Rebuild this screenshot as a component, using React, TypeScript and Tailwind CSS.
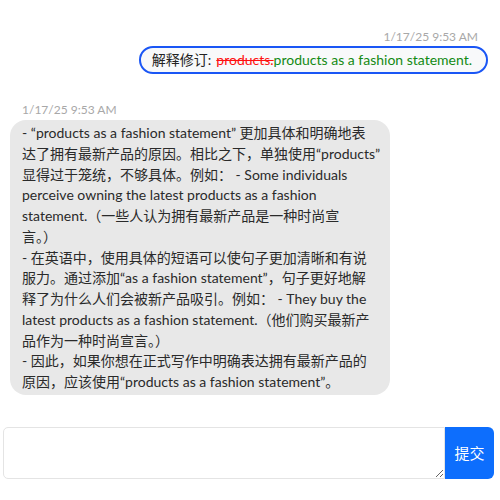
import React from "react";

const lines = [
  "- “products as a fashion statement” 更加具体和明确地表",
  "达了拥有最新产品的原因。相比之下，单独使用“products”",
  "显得过于笼统，不够具体。例如：  - Some individuals",
  "perceive owning the latest products as a fashion",
  "statement.（一些人认为拥有最新产品是一种时尚宣",
  "言。）",
  "- 在英语中，使用具体的短语可以使句子更加清晰和有说",
  "服力。通过添加“as a fashion statement”，句子更好地解",
  "释了为什么人们会被新产品吸引。例如：  - They buy the",
  "latest products as a fashion statement.（他们购买最新产",
  "品作为一种时尚宣言。）",
  "- 因此，如果你想在正式写作中明确表达拥有最新产品的",
  "原因，应该使用“products as a fashion statement”。",
];

export default function App() {
  const font = {
    fontFamily: 'Lato, "Noto Sans CJK SC", "Noto Sans", sans-serif',
  };
  return (
    <div className="w-[500px] h-[500px] bg-white flex flex-col" style={font}>
      <div className="flex flex-col pt-[29px] px-[12px]">
        <div className="self-end mr-[10px] text-[12px] leading-[16px] text-[#a8a8a8]">
          1/17/25 9:53 AM
        </div>
        <div className="self-end mt-[1px] h-[28px] flex items-center rounded-full border-2 border-[#1a56f5] bg-[#f8f9fa] pl-[11px] pr-[14px] text-[14px] leading-[20px] whitespace-nowrap">
          <span className="text-[#222] mr-[5px]">解释修订:</span>
          <span className="text-[#ff1010] line-through">products.</span>
          <span className="text-[#138a13]">products as a fashion statement.</span>
        </div>
      </div>
      <div className="flex flex-col mt-[28px] pl-[10px]">
        <div className="ml-[12px] text-[12px] leading-[16px] text-[#a8a8a8]">
          1/17/25 9:53 AM
        </div>
        <div className="mt-[2px] w-[380px] rounded-[16px] bg-[#e8e8e8] px-[12px] pt-[3px] pb-[2px] text-[14px] leading-[20.75px] text-[#2a2a2a]">
          {lines.map((l, i) => (
            <div key={i} className="whitespace-nowrap">
              {l}
            </div>
          ))}
        </div>
      </div>
      <div className="mt-[32px] flex pl-[3px] pr-[6px]">
        <textarea
          className="flex-1 h-[52px] rounded-l-[5px] border border-[#e4e4e4] bg-white outline-none"
          aria-label="input"
        />
        <button className="w-[49px] h-[52px] rounded-r-[6px] bg-[#0d6efd] text-white text-[15px]">
          提交
        </button>
      </div>
    </div>
  );
}
